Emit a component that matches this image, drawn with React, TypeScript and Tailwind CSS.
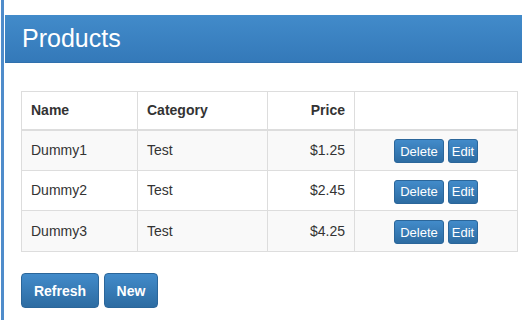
import React from "react"

const products = [
  { name: "Dummy1", category: "Test", price: "$1.25" },
  { name: "Dummy2", category: "Test", price: "$2.45" },
  { name: "Dummy3", category: "Test", price: "$4.25" },
]

const smallBtn =
  "h-[24px] rounded-[3px] border border-[#2b669a] bg-linear-to-b from-[#428bca] to-[#2d6ca2] text-white text-[13px] leading-none"

const bigBtn =
  "h-[35px] rounded-[4px] border border-[#2b669a] bg-linear-to-b from-[#428bca] to-[#2d6ca2] text-white text-[14px] font-bold leading-none"

const App = () => {
  return (
    <div className="min-h-screen bg-white font-['Liberation_Sans',Arial,sans-serif] text-[#333]">
      <div className="ml-[1px] min-h-[320px] border-l-[3px] border-[#4f8ccb] pl-[1px] pt-[15px]">
        <div className="flex h-[48px] items-center bg-linear-to-b from-[#428bca] to-[#3479b9] px-[17px] text-[25px] text-white border-b border-[#3070ad]">
          Products
        </div>
        <div className="pl-[16px] pt-[28px]">
          <table className="w-[497px] table-fixed border-collapse text-[14px]">
            <colgroup>
              <col className="w-[116px]" />
              <col className="w-[130px]" />
              <col className="w-[87px]" />
              <col />
            </colgroup>
            <thead>
              <tr className="h-[38px]">
                <th className="border border-[#ddd] border-b-2 px-[9px] text-left font-bold">Name</th>
                <th className="border border-[#ddd] border-b-2 px-[9px] text-left font-bold">Category</th>
                <th className="border border-[#ddd] border-b-2 px-[9px] text-right font-bold">Price</th>
                <th className="border border-[#ddd] border-b-2"></th>
              </tr>
            </thead>
            <tbody>
              {products.map((p, index) => (
                <tr
                  key={index}
                  className={`${index === 1 ? "h-[40px] bg-white" : "h-[41px] bg-[#f9f9f9]"}`}
                >
                  <td className="border border-[#ddd] px-[9px]">{p.name}</td>
                  <td className="border border-[#ddd] px-[9px]">{p.category}</td>
                  <td className="border border-[#ddd] px-[9px] text-right">{p.price}</td>
                  <td className="border border-[#ddd] pt-[2px]">
                    <div className="flex justify-center gap-[4px]">
                      <button className={`${smallBtn} w-[50px]`}>Delete</button>
                      <button className={`${smallBtn} w-[30px]`}>Edit</button>
                    </div>
                  </td>
                </tr>
              ))}
            </tbody>
          </table>
          <div className="mt-[21px] flex gap-[5px]">
            <button className={`${bigBtn} w-[78px]`}>Refresh</button>
            <button className={`${bigBtn} w-[54px]`}>New</button>
          </div>
        </div>
      </div>
    </div>
  )
}

export default App
